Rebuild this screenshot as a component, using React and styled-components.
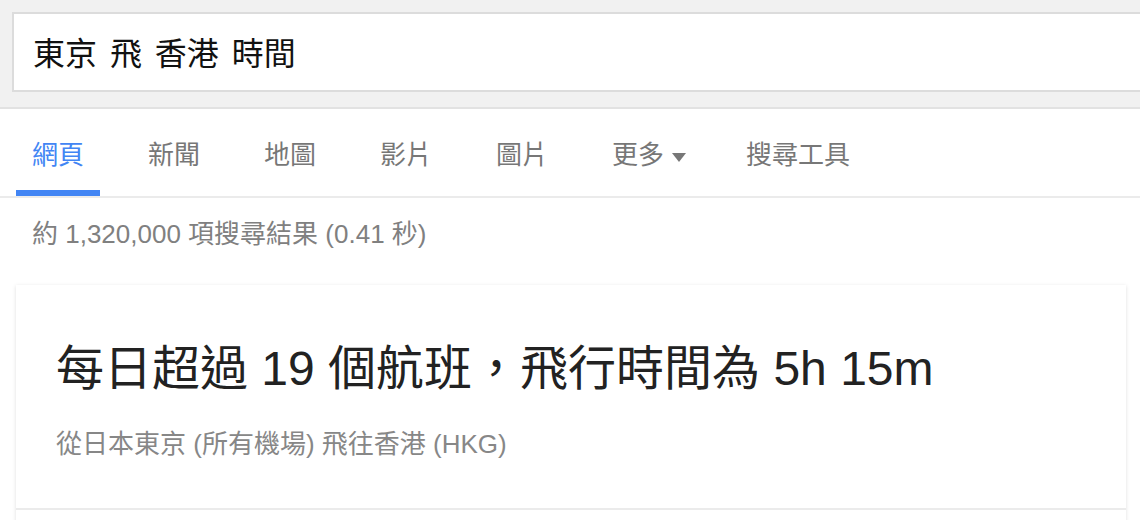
import React from "react";
import styled, { createGlobalStyle } from "styled-components";

const GlobalStyle = createGlobalStyle`
  html, body {
    margin: 0;
    padding: 0;
    background: #fff;
    font-family: "Liberation Sans", Arial, "Noto Sans CJK TC", sans-serif;
    overflow: hidden;
  }
`;

const Page = styled.div`
  width: 1140px;
  height: 520px;
  overflow: hidden;
`;

const Header = styled.div`
  background: #f1f1f1;
  height: 109px;
  padding: 12px 0 0 12px;
  box-sizing: border-box;
  border-bottom: 2px solid #e2e2e2;
`;

const SearchBox = styled.div`
  height: 80px;
  width: 1200px;
  box-sizing: border-box;
  background: #fff;
  border: 2px solid #dcdcdc;
  border-right: none;
  display: flex;
  align-items: center;
  padding: 0 0 2px 19px;
  font-size: 32px;
  color: #111;
  word-spacing: 4px;
`;

const TabBar = styled.div`
  display: flex;
  gap: 32px;
  height: 87px;
  padding-left: 16px;
  border-bottom: 2px solid #ebebeb;
`;

const Tab = styled.div`
  position: relative;
  display: flex;
  align-items: flex-start;
  padding: 31px ${(p) => (p.$menu ? "12px" : "16px")} 0 16px;
  font-size: 26px;
  line-height: 30px;
  color: ${(p) => (p.$active ? "#4285f4" : "#777")};

  &::after {
    content: "";
    display: ${(p) => (p.$active ? "block" : "none")};
    position: absolute;
    left: 0;
    right: 0;
    bottom: 0;
    height: 6px;
    background: #4285f4;
  }
`;

const Arrow = styled.span`
  width: 0;
  height: 0;
  margin: 13px 0 0 8px;
  border-left: 7.5px solid transparent;
  border-right: 7.5px solid transparent;
  border-top: 9px solid #777;
`;

const Stats = styled.div`
  padding: 21px 32px 0;
  font-size: 26px;
  line-height: 30px;
  color: #808080;
`;

const Card = styled.div`
  margin: 36px 0 0 16px;
  width: 1110px;
  background: #fff;
  box-shadow: 0 1px 4px rgba(0, 0, 0, 0.13);
`;

const CardBody = styled.div`
  padding: 56px 40px 48px;
  border-bottom: 2px solid #ebebeb;
`;

const Headline = styled.div`
  font-size: 48px;
  line-height: 56px;
  color: #222;
`;

const Subtitle = styled.div`
  margin-top: 31px;
  font-size: 26px;
  line-height: 32px;
  color: #878787;
`;

const CardFoot = styled.div`
  height: 60px;
`;

const tabs = ["網頁", "新聞", "地圖", "影片", "圖片"];

export default function App() {
  return (
    <Page>
      <GlobalStyle />
      <Header>
        <SearchBox>東京 飛 香港 時間</SearchBox>
      </Header>
      <TabBar>
        {tabs.map((t, i) => (
          <Tab key={t} $active={i === 0}>
            {t}
          </Tab>
        ))}
        <Tab $menu>
          更多
          <Arrow />
        </Tab>
        <Tab>搜尋工具</Tab>
      </TabBar>
      <Stats>約 1,320,000 項搜尋結果 (0.41 秒)</Stats>
      <Card>
        <CardBody>
          <Headline>每日超過 19 個航班，飛行時間為 5h 15m</Headline>
          <Subtitle>從日本東京 (所有機場) 飛往香港 (HKG)</Subtitle>
        </CardBody>
        <CardFoot />
      </Card>
    </Page>
  );
}
